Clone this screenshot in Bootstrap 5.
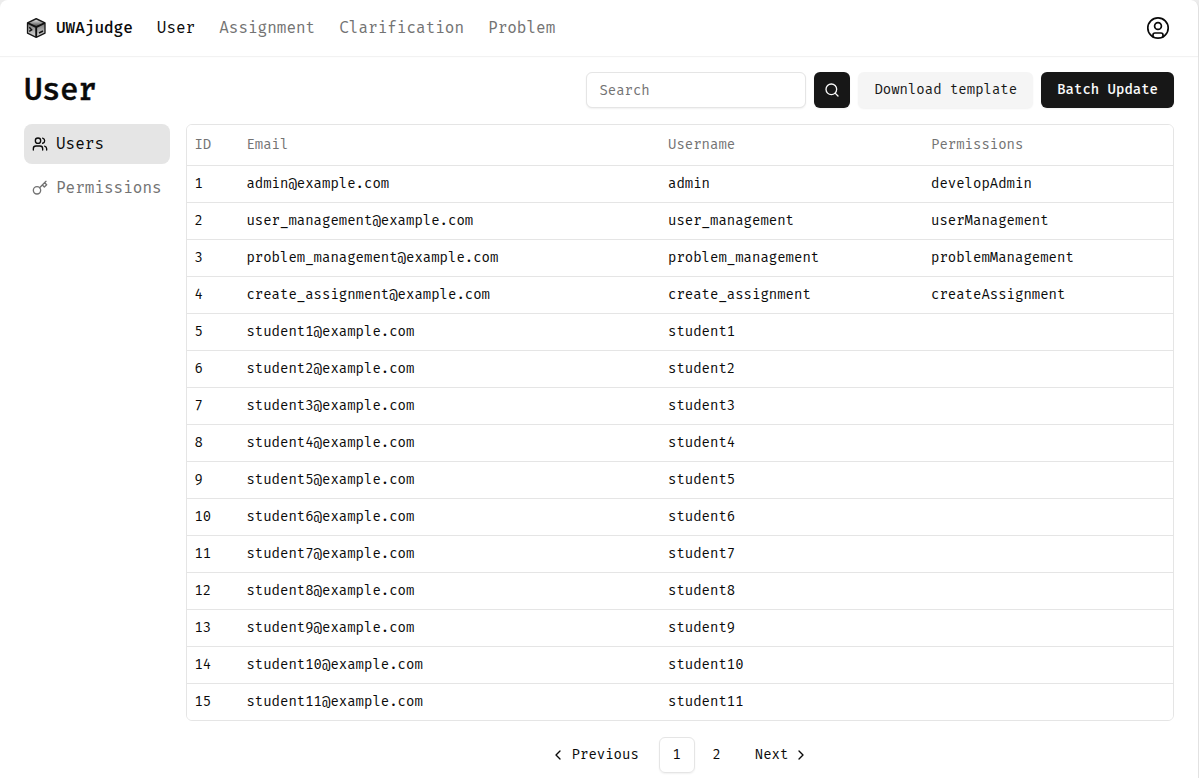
<!DOCTYPE html>
<html lang="en">
<head>
<meta charset="utf-8">
<meta name="viewport" content="width=device-width, initial-scale=1">
<title>UWAjudge - User</title>
<link href="https://cdn.jsdelivr.net/npm/bootstrap@5.3.0/dist/css/bootstrap.min.css" rel="stylesheet">
<style>
:root{--ink:#0a0a0a;--muted:#737373;--line:#e5e5e5}
html{background:#ececec;overflow:hidden}
body{font-family:"Fira Mono","Fira Code","DejaVu Sans Mono","Liberation Mono",monospace;color:var(--ink);background:#ececec;font-size:14px;line-height:20px;height:778px;overflow:hidden}
.app-window{height:800px;background:#fff;border-right:1px solid #e2e2e2;border-radius:8px 8px 0 0}
.topbar{height:56px;box-shadow:0 1px 1px rgba(0,0,0,.05);padding:0 28px 0 24px}
.fs-nav{font-size:16px;line-height:24px}
.topbar a,.side a,.pager a{color:var(--ink);text-decoration:none}
.topbar a.dim,.side a.dim{color:var(--muted)}
.medium{font-weight:500}
svg.line-icon{fill:none;stroke:currentColor;stroke-width:2;stroke-linecap:round;stroke-linejoin:round;flex:none}
svg.fine{stroke-width:1.7}
.heading{font-size:31px;line-height:36px;font-weight:500;letter-spacing:-.6px;-webkit-text-stroke:.4px currentColor}
.ctl{height:36px;border-radius:6px;font-size:14px;line-height:20px;box-shadow:0 1px 2px rgba(0,0,0,.06)}
.search-field{width:220px;padding:4px 12px;border-color:var(--line)}
.search-field::placeholder{color:var(--muted)}
.btn-icon{width:36px}
.btn-ink,.btn-ink:hover{background:#171717;color:#fafafa;border:0}
.btn-soft,.btn-soft:hover{background:#f5f5f5;color:#171717;border:0}
.side{width:146px}
.side a{height:40px;border-radius:8px;padding:0 8px}
.side a.active{background:var(--line)}
.frame{border:1px solid var(--line);border-radius:6px;overflow:hidden}
.frame .table{table-layout:fixed;--bs-table-color:#0a0a0a;--bs-table-bg:#fff;border-color:var(--line)}
.frame .table th,.frame .table td{padding:8px;height:37px;line-height:20px;border-color:var(--line);color:var(--ink)}
.frame .table thead th{height:40px;padding:9px 8px 10px;font-weight:400;color:var(--muted)}
.frame .table tbody tr:last-child td{border-bottom:0;height:36px}
.frame .table tr>:first-child,.frame .table tr>:nth-child(2){padding-left:7.400px}
.c-id{width:52px}.c-mail{width:421px}.c-name{width:263px}
.pager{padding-right:1px}
.pager a{height:36px;border-radius:6px}
.pager .num{width:36px}
.pager .current{border:1px solid var(--line);box-shadow:0 1px 2px rgba(0,0,0,.06)}
.prev{padding:0 16px 0 10px}.next{padding:0 10px 0 16px}
.step{gap:6px}.next.step{gap:5px}
</style>
</head>
<body>
<div class="app-window">
  <nav class="topbar fs-nav d-flex align-items-center justify-content-between">
    <div class="d-flex align-items-center gap-4">
      <a href="#" class="d-flex align-items-center gap-2 medium">
        <svg width="24" height="24" viewBox="0 0 24 24">
          <defs><linearGradient id="g" x1="0" y1="0" x2="0" y2="1"><stop offset="0" stop-color="#e4e4e4"/><stop offset="1" stop-color="#3a3a3a"/></linearGradient><linearGradient id="s" x1="0" y1="0" x2="0" y2="1"><stop offset="0" stop-color="#555"/><stop offset="1" stop-color="#ddd"/></linearGradient></defs>
          <path d="M12.200 2.700 21 6.800v10.400L12.200 21.400 3.500 17.200V6.800z" fill="url(#s)" stroke="#171717" stroke-width="1.3" stroke-linejoin="round"/>
          <path d="M5 7.200 12.200 3.800l7.300 3.400-7.300 3.700z" fill="url(#g)"/>
          <path d="M3.800 7 12.200 11.200 20.800 7M12.200 11.200V21" fill="none" stroke="#111" stroke-width="1.9"/>
          <path d="m5.300 11.300 2.400 2.500-2.500 1.500M15 17l4-2" fill="none" stroke="#111" stroke-width="1.400"/>
        </svg>
        <span>UWAjudge</span></a>
      <a href="#">User</a>
      <a href="#" class="dim">Assignment</a>
      <a href="#" class="dim">Clarification</a>
      <a href="#" class="dim">Problem</a>
    </div>
    <a href="#" aria-label="Account" class="d-flex"><svg class="line-icon fine" width="24" height="24" viewBox="0 0 24 24"><circle cx="12" cy="12" r="10.200"/><circle cx="12" cy="10" r="3.400"/><path d="M7 20.662V19a2 2 0 0 1 2-2h6a2 2 0 0 1 2 2v1.662"/></svg></a>
  </nav>

  <main class="px-4">
    <header class="d-flex align-items-center justify-content-between py-3">
      <h1 class="heading m-0">User</h1>
      <div class="d-flex gap-2">
        <input class="form-control ctl search-field" placeholder="Search" aria-label="Search">
        <button class="btn btn-ink btn-icon ctl p-0 d-flex align-items-center justify-content-center" aria-label="Search"><svg class="line-icon" width="16" height="16" viewBox="0 0 24 24"><circle cx="11" cy="11" r="8"/><path d="m21 21-4.300-4.300"/></svg></button>
        <button class="btn btn-soft ctl px-3 py-0">Download template</button>
        <button class="btn btn-ink ctl px-3 py-0 medium">Batch Update</button>
      </div>
    </header>
    <div class="d-flex gap-3">
      <aside class="side fs-nav d-flex flex-column gap-1 flex-shrink-0">
        <a href="#" class="active d-flex align-items-center gap-2"><svg class="line-icon" width="16" height="16" viewBox="0 0 24 24"><path d="M16 21v-2a4 4 0 0 0-4-4H6a4 4 0 0 0-4 4v2"/><circle cx="9" cy="7" r="4"/><path d="M22 21v-2a4 4 0 0 0-3-3.870M16 3.130a4 4 0 0 1 0 7.750"/></svg>Users</a>
        <a href="#" class="dim d-flex align-items-center gap-2"><svg class="line-icon" width="16" height="16" viewBox="0 0 24 24"><circle cx="7.500" cy="15.500" r="5.500"/><path d="m21 2-9.600 9.600M15.500 7.500l3 3L22 7l-3-3"/></svg>Permissions</a>
      </aside>
      <section class="flex-grow-1">
        <div class="frame">
          <table class="table mb-0">
            <colgroup><col class="c-id"><col class="c-mail"><col class="c-name"><col></colgroup>
            <thead><tr><th>ID</th><th>Email</th><th>Username</th><th>Permissions</th></tr></thead>
            <tbody>
              <tr><td>1</td><td>admin@example.com</td><td>admin</td><td>developAdmin</td></tr>
              <tr><td>2</td><td>user_management@example.com</td><td>user_management</td><td>userManagement</td></tr>
              <tr><td>3</td><td>problem_management@example.com</td><td>problem_management</td><td>problemManagement</td></tr>
              <tr><td>4</td><td>create_assignment@example.com</td><td>create_assignment</td><td>createAssignment</td></tr>
              <tr><td>5</td><td>student1@example.com</td><td>student1</td><td></td></tr>
              <tr><td>6</td><td>student2@example.com</td><td>student2</td><td></td></tr>
              <tr><td>7</td><td>student3@example.com</td><td>student3</td><td></td></tr>
              <tr><td>8</td><td>student4@example.com</td><td>student4</td><td></td></tr>
              <tr><td>9</td><td>student5@example.com</td><td>student5</td><td></td></tr>
              <tr><td>10</td><td>student6@example.com</td><td>student6</td><td></td></tr>
              <tr><td>11</td><td>student7@example.com</td><td>student7</td><td></td></tr>
              <tr><td>12</td><td>student8@example.com</td><td>student8</td><td></td></tr>
              <tr><td>13</td><td>student9@example.com</td><td>student9</td><td></td></tr>
              <tr><td>14</td><td>student10@example.com</td><td>student10</td><td></td></tr>
              <tr><td>15</td><td>student11@example.com</td><td>student11</td><td></td></tr>
            </tbody>
          </table>
        </div>
        <div class="pager d-flex justify-content-center gap-1 mt-3">
          <a href="#" class="prev step d-flex align-items-center"><svg class="line-icon" width="16" height="16" viewBox="0 0 24 24"><path d="m15 18-6-6 6-6"/></svg>Previous</a>
          <a href="#" class="num current d-flex align-items-center justify-content-center">1</a>
          <a href="#" class="num d-flex align-items-center justify-content-center">2</a>
          <a href="#" class="next step d-flex align-items-center">Next<svg class="line-icon" width="16" height="16" viewBox="0 0 24 24"><path d="m9 18 6-6-6-6"/></svg></a>
        </div>
      </section>
    </div>
  </main>
</div>
<script src="https://cdn.jsdelivr.net/npm/bootstrap@5.3.0/dist/js/bootstrap.bundle.min.js"></script>
</body>
</html>
